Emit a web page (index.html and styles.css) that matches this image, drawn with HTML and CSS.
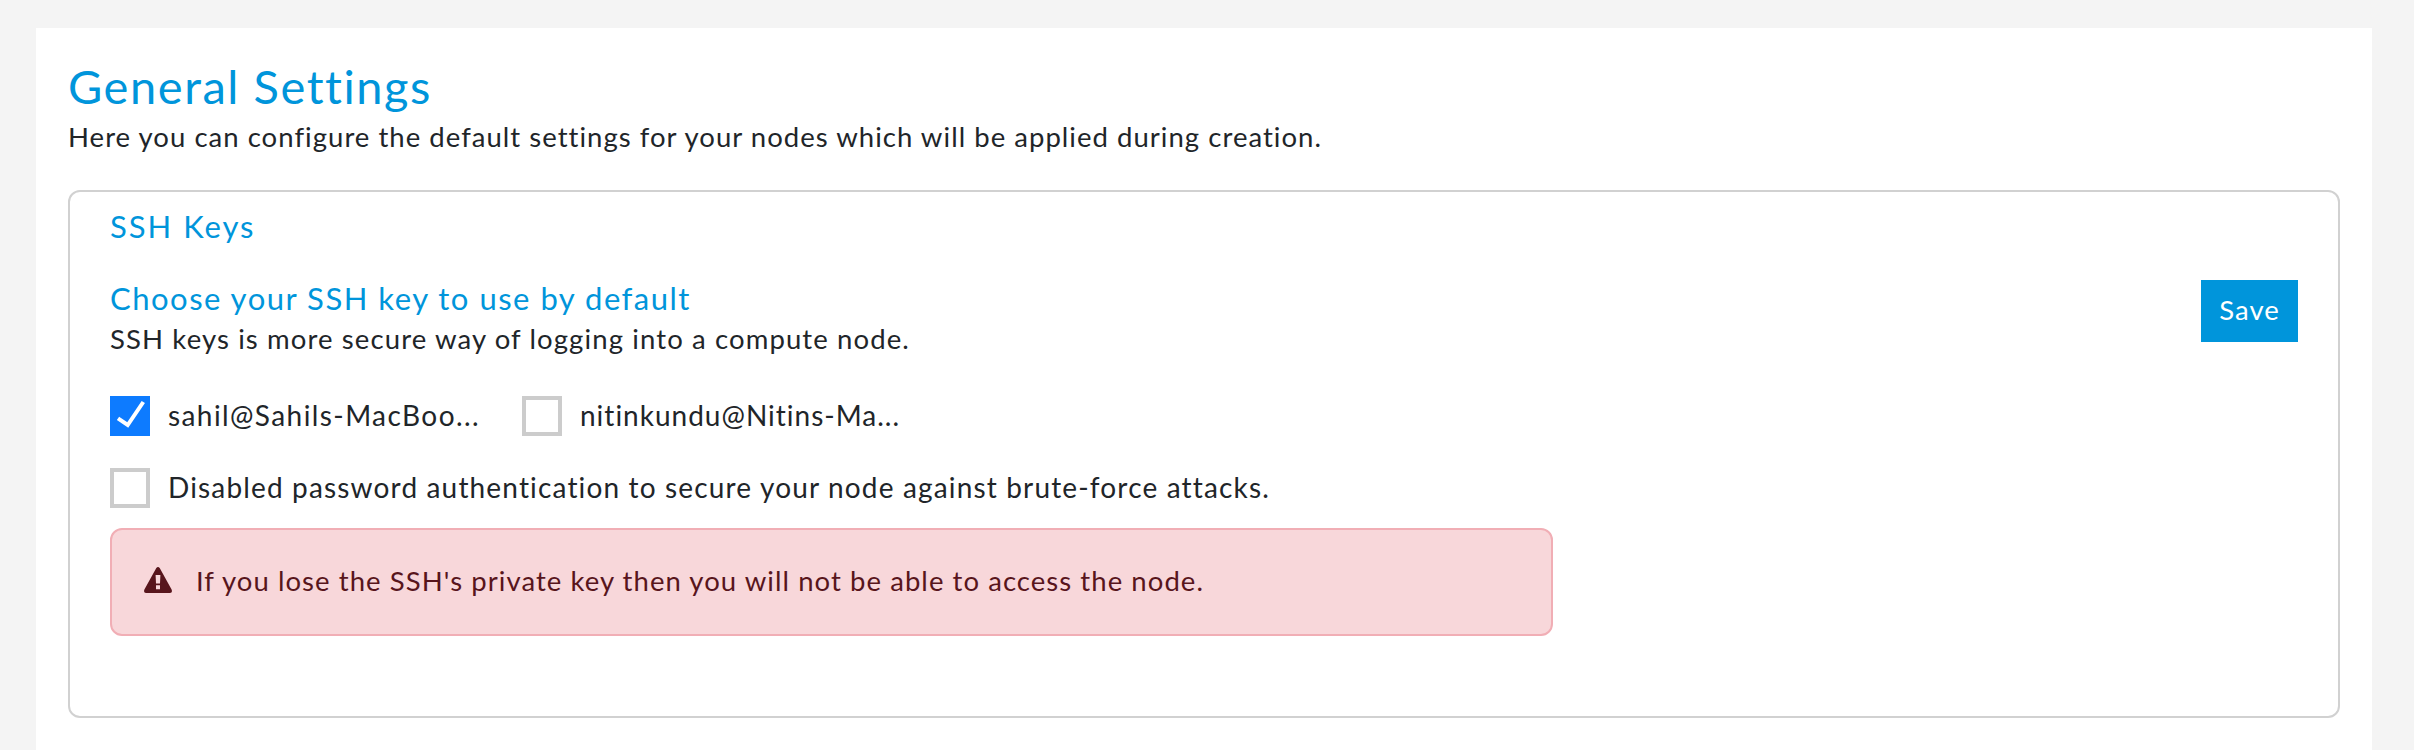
FILE: index.html
```html
<!DOCTYPE html>
<html lang="en">
<head>
<meta charset="utf-8">
<title>General Settings</title>
<link rel="stylesheet" href="styles.css">
</head>
<body>
<main class="panel">
  <h1 class="title">General Settings</h1>
  <p class="text intro">Here you can configure the default settings for your nodes which will be applied during creation.</p>
  <section class="card">
    <h2 class="heading ssh">SSH Keys</h2>
    <div class="card-top">
      <div>
        <h3 class="heading choose">Choose your SSH key to use by default</h3>
        <p class="text hint">SSH keys is more secure way of logging into a compute node.</p>
      </div>
      <button class="save">Save</button>
    </div>
    <div class="keys">
      <label class="check"><span class="box box-on"><svg viewBox="0 0 40 40" width="40" height="40"><path d="M8 22.3 L17.7 29 L33.3 6" fill="none" stroke="#fff" stroke-width="4"/></svg></span><span class="text key-a">sahil@Sahils-MacBoo...</span></label>
      <label class="check"><span class="box"></span><span class="text key-b">nitinkundu@Nitins-Ma...</span></label>
    </div>
    <label class="check password"><span class="box"></span><span class="text disable">Disabled password authentication to secure your node against brute-force attacks.</span></label>
    <div class="alert">
      <svg class="warn" viewBox="0 0 28 26" width="28" height="26"><path fill="#58151c" fill-rule="evenodd" d="M12.3 1 Q14 -1 15.7 1 L27.6 22.5 Q28.8 26 26 26 H2 Q-.8 26 .4 22.5 Z M11.6 8 L12 16.5 H16 L16.4 8 Z M12 18.3 V22.3 H16 V18.3 Z"/></svg>
      <span class="text alert-text">If you lose the SSH's private key then you will not be able to access the node.</span>
    </div>
  </section>
</main>
</body>
</html>
```
FILE: styles.css
```css
* { box-sizing: border-box; }
body { margin: 0; padding: 28px 42px 0 36px; height: 750px; overflow: hidden; background: #f4f4f4; color: #212529; font-family: Lato, "Noto Sans", sans-serif; font-variant-ligatures: none; }
h1, h2, h3, p { margin: 0; font-weight: 400; }
.panel { height: 722px; padding: 31px 32px 0; background: #fff; }
.title { color: #0095db; font-size: 47px; line-height: 55px; letter-spacing: 1.554px; }
.text { padding-bottom: 2px; font-size: 27.5px; line-height: 38px; white-space: nowrap; }
.intro { margin-top: 4px; letter-spacing: 1.028px; }
.card { height: 528px; margin-top: 32px; padding: 16px 40px 0; border: 2px solid #d1d1d1; border-radius: 12px; }
.heading { padding-bottom: 4px; color: #0095db; font-size: 31px; line-height: 36px; }
.ssh { letter-spacing: 1.975px; }
.choose { letter-spacing: 1.501px; }
.hint { letter-spacing: 1.114px; }
.card-top { display: flex; justify-content: space-between; margin-top: 32px; }
.save { width: 97px; height: 62px; padding: 0 0 3px; border: 0; background: #0095db; color: #fff; font: 27.5px Lato, sans-serif; letter-spacing: 1.016px; }
.keys { display: flex; gap: 42px; margin-top: 36px; }
.check { display: flex; gap: 18px; align-items: center; height: 40px; }
.check .text { font-size: 28px; }
.key-a { width: 312px; letter-spacing: 1.41px; }
.key-b { letter-spacing: 1px; }
.disable { letter-spacing: 1.157px; }
.box { width: 40px; height: 40px; flex: none; border: 4px solid #ccc; }
.box-on { border: 0; background: #0d7bff; }
.box svg { display: block; }
.password { margin-top: 32px; }
.alert { display: flex; align-items: center; width: 1443px; height: 108px; margin-top: 20px; padding-left: 32px; gap: 24px; background: #f8d7da; border: 2px solid #f1aeb5; border-radius: 12px; color: #58151c; }
.warn { margin-bottom: 4px; }
.alert-text { letter-spacing: 1.057px; }
```
